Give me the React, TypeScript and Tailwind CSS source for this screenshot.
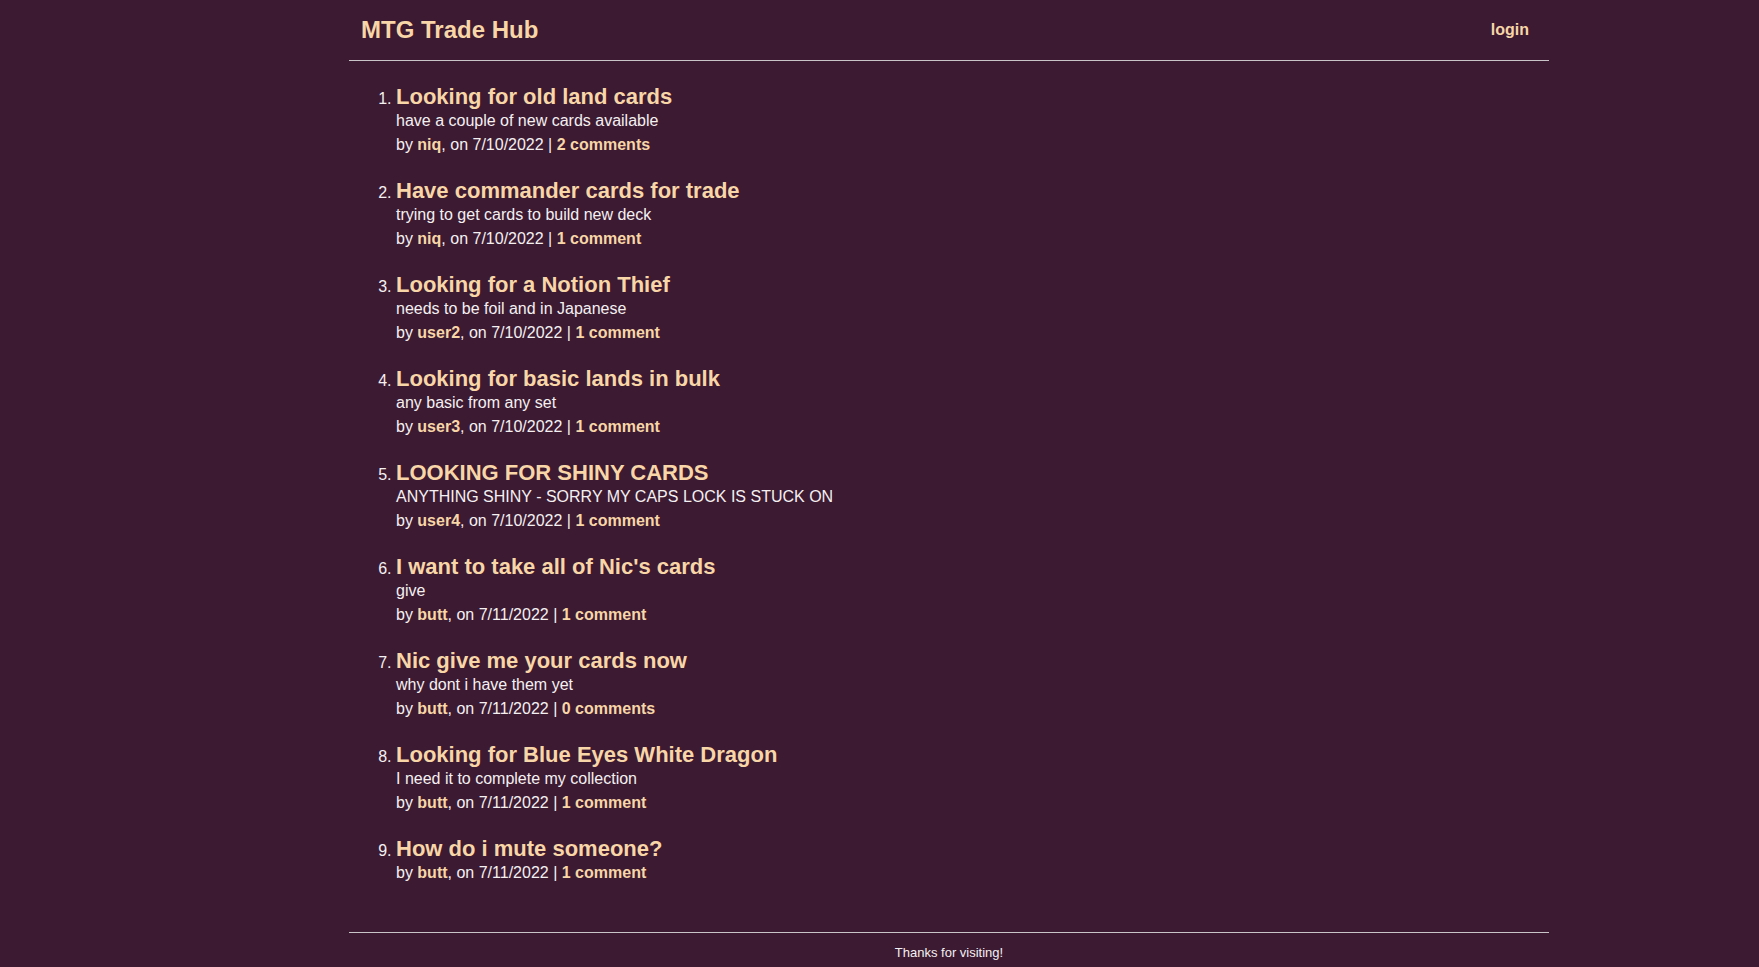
import React from 'react'

type Post = {
  title: string
  body?: string
  user: string
  date: string
  comments: number
}

const posts: Post[] = [
  { title: 'Looking for old land cards', body: 'have a couple of new cards available', user: 'niq', date: '7/10/2022', comments: 2 },
  { title: 'Have commander cards for trade', body: 'trying to get cards to build new deck', user: 'niq', date: '7/10/2022', comments: 1 },
  { title: 'Looking for a Notion Thief', body: 'needs to be foil and in Japanese', user: 'user2', date: '7/10/2022', comments: 1 },
  { title: 'Looking for basic lands in bulk', body: 'any basic from any set', user: 'user3', date: '7/10/2022', comments: 1 },
  { title: 'LOOKING FOR SHINY CARDS', body: 'ANYTHING SHINY - SORRY MY CAPS LOCK IS STUCK ON', user: 'user4', date: '7/10/2022', comments: 1 },
  { title: "I want to take all of Nic's cards", body: 'give', user: 'butt', date: '7/11/2022', comments: 1 },
  { title: 'Nic give me your cards now', body: 'why dont i have them yet', user: 'butt', date: '7/11/2022', comments: 0 },
  { title: 'Looking for Blue Eyes White Dragon', body: 'I need it to complete my collection', user: 'butt', date: '7/11/2022', comments: 1 },
  { title: 'How do i mute someone?', user: 'butt', date: '7/11/2022', comments: 1 },
]

const App = () => {
  return (
    <div className="min-h-[967px] bg-[#3c1a31] text-[#f4f0f2] font-['Liberation_Sans',Arial,sans-serif]">
      <div className="w-[1200px] ml-[349px]">
        {/* Header */}
        <div className="flex items-center justify-between h-[61px] pl-3 pr-5 border-b border-[#c9c4c7]">
          <h1 className="text-2xl font-bold text-[#f8d6a8]">MTG Trade Hub</h1>
          <a href="#" className="font-bold text-[#f8d6a8] text-base">login</a>
        </div>

        {/* Posts */}
        <ol className="list-decimal pl-[47px] pt-[23px] pb-[47px]">
          {posts.map((p, i) => (
            <li key={i} className="mb-[21px] text-base leading-6 last:mb-0">
              <h3 className="text-[22px] font-bold leading-[25px] text-[#f8d6a8]">{p.title}</h3>
              {p.body && <p className="leading-6">{p.body}</p>}
              <p className="leading-6">
                by <b className="text-[#f8d6a8]">{p.user}</b>, on {p.date} |{' '}
                <a href="#" className="font-bold text-[#f8d6a8]">
                  {p.comments} {p.comments === 1 ? 'comment' : 'comments'}
                </a>
              </p>
            </li>
          ))}
        </ol>

        {/* Footer */}
        <div className="border-t border-[#c9c4c7] pt-[10px] pb-2 text-center">
          <p className="text-[13px]">Thanks for visiting!</p>
        </div>
      </div>
    </div>
  )
}

export default App
